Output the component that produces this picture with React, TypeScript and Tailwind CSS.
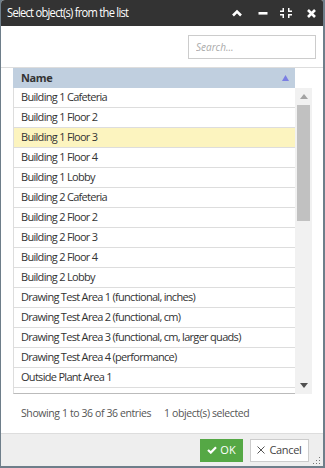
import React from "react";

const rows = [
  "Building 1 Cafeteria",
  "Building 1 Floor 2",
  "Building 1 Floor 3",
  "Building 1 Floor 4",
  "Building 1 Lobby",
  "Building 2 Cafeteria",
  "Building 2 Floor 2",
  "Building 2 Floor 3",
  "Building 2 Floor 4",
  "Building 2 Lobby",
  "Drawing Test Area 1 (functional, inches)",
  "Drawing Test Area 2 (functional, cm)",
  "Drawing Test Area 3 (functional, cm, larger quads)",
  "Drawing Test Area 4 (performance)",
  "Outside Plant Area 1",
  "",
];

const font = { fontFamily: '"Open Sans", "Liberation Sans", sans-serif' };

const TitleIcons = () => (
  <div className="flex items-center pr-[7px]">
    <svg width="10" height="8" viewBox="0 0 10 8">
      <path d="M1 6.5 L5 2.5 L9 6.5" fill="none" stroke="#fff" strokeWidth="2.6" />
    </svg>
    <svg className="ml-[16px]" width="10" height="8" viewBox="0 0 10 8">
      <rect x="0.5" y="3" width="9" height="2.6" fill="#fff" />
    </svg>
    <svg className="ml-[11px]" width="14" height="10" viewBox="0 0 14 10">
      <g fill="#fff">
        <path d="M1 2.5 H3.5 V0 H5 V4 H1 Z" />
        <path d="M13 2.5 H10.5 V0 H9 V4 H13 Z" />
        <path d="M1 7.5 H3.5 V10 H5 V6 H1 Z" />
        <path d="M13 7.5 H10.5 V10 H9 V6 H13 Z" />
      </g>
    </svg>
    <svg className="ml-[14px]" width="9" height="9" viewBox="0 0 9 9">
      <path d="M1 1 L8 8 M8 1 L1 8" stroke="#fff" strokeWidth="2.6" />
    </svg>
  </div>
);

export default function App() {
  return (
    <div className="w-[325px] h-[468px] bg-[#6e7e8a] overflow-hidden" style={font}>
      <div className="ml-[1px] w-[322px] h-[466px] bg-white flex flex-col rounded-tl-[4px] rounded-tr-[2px] overflow-hidden">
        {/* title bar */}
        <div className="h-[26px] bg-[#333333] flex items-center justify-between pl-[7px] -ml-[1px] w-[323px] rounded-tl-[4px]">
          <span className="text-white text-[12px] tracking-[-0.8px] scale-x-[0.93] origin-left whitespace-nowrap">
            Select object(s) from the list
          </span>
          <TitleIcons />
        </div>

        {/* search */}
        <div className="flex justify-end pt-[9px] pr-[7px] h-[41px]">
          <input
            className="w-[128px] h-[24px] border border-[#cccccc] px-[7px] text-[10px] italic placeholder:text-[#aaaaaa] outline-none"
            placeholder="Search..."
          />
        </div>

        {/* table */}
        <div className="border-t border-[#dddddd] pl-[12px] pr-[10px]">
          <div className="w-[282px] h-[20px] bg-[#c0cfdf] flex items-center justify-between pl-[8px] pr-[6px]">
            <span className="text-[11px] font-bold text-[#333333] tracking-[-0.4px]">Name</span>
            <svg width="7" height="6" viewBox="0 0 7 6">
              <path d="M3.5 0 L7 6 H0 Z" fill="#7b7fe3" />
            </svg>
          </div>
          <div className="flex h-[306px]">
            <div className="w-[282px] overflow-hidden border-l border-[#dddddd] border-b border-b-[#bbbbbb]">
              {rows.map((r, i) => (
                <div
                  key={i}
                  className={`h-[20px] flex items-center pl-[7px] border-b border-[#dddddd] text-[11px] text-[#333333] tracking-[-0.7px] whitespace-nowrap ${
                    i === 2 ? "bg-[#fcf4bf]" : "bg-white"
                  }`}
                >
                  {r}
                </div>
              ))}
            </div>
            {/* scrollbar */}
            <div className="w-[17px] bg-[#f1f1f1] flex flex-col items-center">
              <div className="h-[17px] flex items-center justify-center">
                <svg width="8" height="5" viewBox="0 0 8 5">
                  <path d="M4 0 L8 5 H0 Z" fill="#a3a3a3" />
                </svg>
              </div>
              <div className="w-[13px] h-[116px] bg-[#c1c1c1]" />
              <div className="flex-1" />
              <div className="h-[17px] flex items-center justify-center">
                <svg width="8" height="5" viewBox="0 0 8 5">
                  <path d="M0 0 H8 L4 5 Z" fill="#505050" />
                </svg>
              </div>
            </div>
          </div>
        </div>

        {/* info */}
        <div className="flex-1 flex items-center pl-[20px] gap-[13px] text-[10.5px] text-[#555555] tracking-[-0.4px]">
          <span>Showing 1 to 36 of 36 entries</span>
          <span>1 object(s) selected</span>
        </div>

        {/* footer */}
        <div className="relative h-[33px] bg-[#eeeeee] border-t border-[#dddddd] flex items-center justify-end gap-[7px] pr-[14px]">
          <button className="h-[23px] w-[43px] bg-[#55a845] text-white text-[11px] flex items-center justify-center gap-[3px]">
            <svg width="10" height="8" viewBox="0 0 10 8">
              <path d="M1 4 L3.8 6.6 L9 1.2" fill="none" stroke="#fff" strokeWidth="2.2" />
            </svg>
            OK
          </button>
          <button className="h-[23px] w-[59px] bg-white border border-[#cccccc] text-[#444444] text-[11px] tracking-[-0.3px] flex items-center justify-center gap-[4px]">
            <svg width="8" height="8" viewBox="0 0 8 8">
              <path d="M0.5 0.5 L7.5 7.5 M7.5 0.5 L0.5 7.5" stroke="#555" strokeWidth="1" />
            </svg>
            Cancel
          </button>
          <svg className="absolute right-[2px] bottom-[1px]" width="8" height="8" viewBox="0 0 8 8">
            <g fill="#777">
              <rect x="6" y="0" width="1" height="1" />
              <rect x="6" y="3" width="1" height="1" />
              <rect x="3" y="3" width="1" height="1" />
              <rect x="6" y="6" width="1" height="1" />
              <rect x="3" y="6" width="1" height="1" />
              <rect x="0" y="6" width="1" height="1" />
            </g>
          </svg>
        </div>
      </div>
    </div>
  );
}
